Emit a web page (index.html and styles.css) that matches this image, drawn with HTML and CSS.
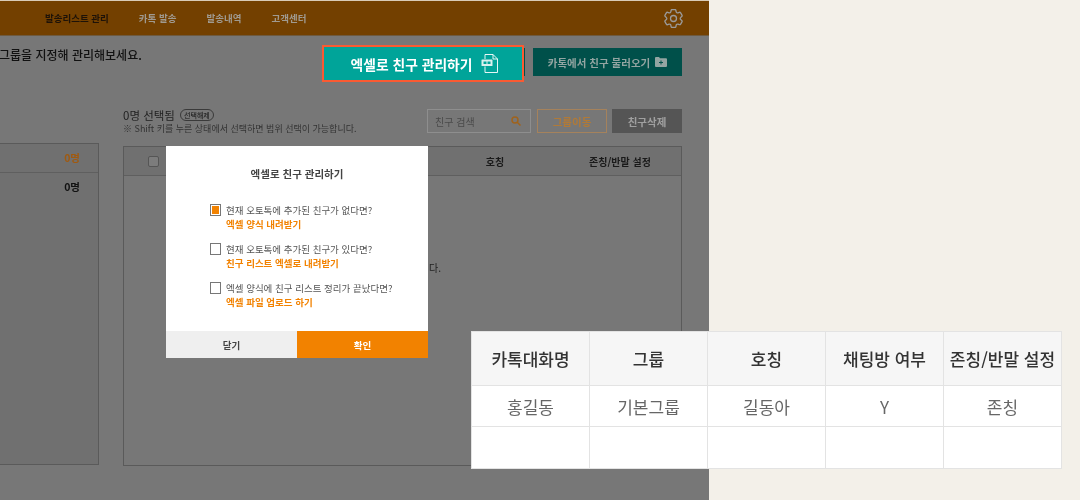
FILE: index.html
```html
<!DOCTYPE html>
<html lang="ko">
<head>
<meta charset="utf-8">
<title>엑셀로 친구 관리하기</title>
<link rel="stylesheet" href="styles.css">
</head>
<body>
<div class="stage">
  <div class="app">
    <header class="topbar">
      <nav class="nav">
        <a class="nav-item nav-active">발송리스트 관리</a>
        <a class="nav-item">카톡 발송</a>
        <a class="nav-item">발송내역</a>
        <a class="nav-item">고객센터</a>
      </nav>
      <svg class="gear" viewBox="2.500 2.500 19 19" fill="none" stroke="#9a9a9a" stroke-width="1.300" stroke-linejoin="round"><path d="M9.594 3.940c.090-.542.560-.940 1.110-.940h2.593c.550 0 1.020.398 1.110.940l.213 1.281c.063.374.313.686.645.870.074.040.147.083.220.127.325.196.720.257 1.075.124l1.217-.456a1.125 1.125 0 0 1 1.370.490l1.296 2.247a1.125 1.125 0 0 1-.260 1.431l-1.003.827c-.293.241-.438.613-.430.992a7.723 7.723 0 0 1 0 .255c-.008.378.137.750.430.991l1.004.827c.424.350.534.955.260 1.430l-1.298 2.247a1.125 1.125 0 0 1-1.369.491l-1.217-.456c-.355-.133-.750-.072-1.076.124a6.470 6.470 0 0 1-.220.128c-.331.183-.581.495-.644.869l-.213 1.281c-.090.543-.560.940-1.110.940h-2.594c-.550 0-1.019-.398-1.110-.940l-.213-1.281c-.062-.374-.312-.686-.644-.870a6.520 6.520 0 0 1-.220-.127c-.325-.196-.720-.257-1.076-.124l-1.217.456a1.125 1.125 0 0 1-1.369-.490l-1.297-2.247a1.125 1.125 0 0 1 .260-1.431l1.004-.827c.292-.240.437-.613.430-.991a6.932 6.932 0 0 1 0-.255c.007-.380-.138-.751-.430-.992l-1.004-.827a1.125 1.125 0 0 1-.260-1.430l1.297-2.247a1.125 1.125 0 0 1 1.370-.491l1.216.456c.356.133.751.072 1.076-.124.072-.044.146-.086.220-.128.332-.183.582-.495.644-.869l.214-1.280Z"/><circle cx="12" cy="12" r="3"/></svg>
    </header>
    <div class="actions">
      <p class="intro">그룹을 지정해 관리해보세요.</p>
      <div class="action-btns">
        <button class="excel-btn">엑셀로 친구 관리하기
          <svg class="doc-icon" viewBox="0 0 17 19" fill="none" stroke="#fff" stroke-width=".9"><path d="M4 5V.5h8l4.500 4.500v13.500H4V12.500"/><path d="M12 .5V5h4.500"/><rect x=".5" y="5.500" width="11" height="6.500" rx=".5" fill="#d8f0ee" stroke="none"/><path d="M2.500 8.750h7" stroke="#00a499" stroke-width="2.500" stroke-dasharray="3 1"/></svg>
        </button>
        <button class="import-btn">카톡에서 친구 불러오기
          <svg class="folder-icon" viewBox="0 0 12 10"><path d="M0 1a1 1 0 0 1 1-1h3l1 1.300h6a1 1 0 0 1 1 1V9a1 1 0 0 1-1 1H1a1 1 0 0 1-1-1z" fill="#93a5a2"/><path d="M6 3.500v4M4 5.500h4" stroke="#00504a" stroke-width="1"/></svg>
        </button>
      </div>
    </div>
    <div class="content">
      <aside class="groups">
        <div class="group-row group-head"><span class="count-accent">0명</span></div>
        <div class="group-row"><span class="count">0명</span></div>
      </aside>
      <section class="friends">
        <div class="toolbar">
          <div class="selection">
            <div class="sel-line"><span class="sel-count">0명 선택됨</span><span class="pill">선택해제</span></div>
            <div class="note">※ Shift 키를 누른 상태에서 선택하면 범위 선택이 가능합니다.</div>
          </div>
          <div class="tools">
            <div class="search"><span>친구 검색</span>
              <svg class="search-icon" viewBox="0 0 10 10" fill="none" stroke="#a0631c" stroke-width="1.500"><circle cx="4" cy="4" r="3"/><path d="M6.200 6.200L9.500 9.500"/></svg>
            </div>
            <button class="move-btn">그룹이동</button>
            <button class="delete-btn">친구삭제</button>
          </div>
        </div>
        <div class="friend-table">
          <div class="friend-head">
            <span class="head-check"><i class="box-dim"></i></span>
            <span class="head-title">호칭</span>
            <span class="head-setting">존칭/반말 설정</span>
          </div>
          <div class="friend-empty"><span>다.</span></div>
        </div>
      </section>
    </div>
    <div class="modal">
      <h2 class="modal-title">엑셀로 친구 관리하기</h2>
      <ul class="options">
        <li class="option"><i class="box box-on"></i><div><p>현재 오토톡에 추가된 친구가 없다면?</p><a>엑셀 양식 내려받기</a></div></li>
        <li class="option"><i class="box"></i><div><p>현재 오토톡에 추가된 친구가 있다면?</p><a>친구 리스트 엑셀로 내려받기</a></div></li>
        <li class="option"><i class="box"></i><div><p>엑셀 양식에 친구 리스트 정리가 끝났다면?</p><a>엑셀 파일 업로드 하기</a></div></li>
      </ul>
      <div class="modal-foot">
        <button class="close-btn">닫기</button>
        <button class="ok-btn">확인</button>
      </div>
    </div>
  </div>
  <table class="sample">
    <thead><tr><th>카톡대화명</th><th>그룹</th><th>호칭</th><th>채팅방 여부</th><th>존칭/반말 설정</th></tr></thead>
    <tbody>
      <tr><td>홍길동</td><td>기본그룹</td><td>길동아</td><td>Y</td><td>존칭</td></tr>
      <tr class="blank"><td></td><td></td><td></td><td></td><td></td></tr>
    </tbody>
  </table>
</div>
</body>
</html>
```
FILE: styles.css
```css
* { box-sizing: border-box; }
html, body { margin: 0; padding: 0; }
body {
  width: 1080px;
  height: 500px;
  overflow: hidden;
  background: #f3f0e9;
  font-family: "Noto Sans CJK KR", "Noto Sans", sans-serif;
  color: #222;
}
p, h2, ul { margin: 0; padding: 0; }
ul { list-style: none; }
button { font-family: inherit; border: 0; padding: 0; }
i { display: block; }

.stage { position: relative; width: 1080px; height: 500px; filter: blur(.3px); }
.app {
  position: relative;
  width: 709px;
  height: 500px;
  border-top: 1px solid #d9cbb6;
  background: #777;
  overflow: hidden;
}

.topbar {
  display: flex;
  align-items: center;
  justify-content: space-between;
  height: 35px;
  padding: 0 26px 0 45px;
  background: #734000;
  border-bottom: 1px solid #6e5a40;
}
.nav { display: flex; gap: 30px; }
.nav-item { font-size: 9.5px; font-weight: 700; line-height: 14px; color: #a09a90; }
.nav-active { color: #1d1208; }
.gear { width: 19px; height: 19px; }

.actions {
  display: flex;
  justify-content: space-between;
  height: 72px;
  padding: 9px 27px 0 0;
}
.intro { font-size: 12px; line-height: 20px; color: #111; font-weight: 500; margin-left: -1px; }
.action-btns { display: flex; align-items: flex-start; gap: 9px; height: 37px; }
.excel-btn {
  position: relative;
  display: flex;
  align-items: center;
  justify-content: center;
  gap: 9px;
  width: 202px;
  height: 37px;
  padding-left: 3px;
  background: #00a499;
  border: 2px solid #fa5a32;
  color: #fff;
  font-size: 13.8px;
  font-weight: 700;
}
.excel-btn::after {
  content: "";
  position: absolute;
  right: -3px;
  top: 1px;
  width: 1px;
  height: 28px;
  background: #00504a;
}
.doc-icon { width: 17px; height: 19px; }
.import-btn {
  display: flex;
  align-items: center;
  justify-content: center;
  gap: 5px;
  width: 149px;
  height: 28px;
  margin-top: 3px;
  background: #00504a;
  color: #93a5a2;
  font-size: 10.5px;
  font-weight: 700;
}
.folder-icon { width: 12px; height: 10px; }

.content { display: flex; gap: 24px; align-items: flex-start; height: 392px; padding-right: 27px; }
.groups {
  width: 99px;
  height: 322px;
  margin-top: 35px;
  background: #707070;
  border: 1px solid #5a5a5a;
  border-left: 0;
}
.group-row {
  display: flex;
  justify-content: flex-end;
  align-items: center;
  height: 29px;
  padding: 0 18px 2px 0;
  font-size: 10.5px;
  font-weight: 700;
}
.group-head { border-bottom: 1px solid #5f5f5f; }
.count-accent { color: #a05a10; }
.count { color: #111; }

.friends { display: flex; flex-direction: column; flex: 1; }
.toolbar { display: flex; justify-content: space-between; height: 38px; }
.sel-line { display: flex; align-items: center; gap: 5px; height: 14px; }
.sel-count { font-size: 11.5px; color: #222; }
.pill {
  width: 34px;
  height: 12px;
  border: 1px solid #3a3a3a;
  border-radius: 6px;
  font-size: 7px;
  line-height: 10px;
  text-align: center;
  color: #111;
}
.note { margin-top: 0; font-size: 9px; line-height: 14px; color: #333; white-space: nowrap; }
.tools { display: flex; gap: 5px; height: 24px; margin-top: 1px; }
.search {
  display: flex;
  align-items: center;
  justify-content: space-between;
  width: 104px;
  margin-right: 1px;
  padding: 0 9px 0 7px;
  border: 1px solid #8e8e8e;
  font-size: 10px;
  color: #4a4a4a;
}
.search-icon { width: 10px; height: 10px; }
.move-btn {
  width: 70px;
  background: transparent;
  border: 1px solid #a5825c;
  color: #b07a38;
  font-size: 10.5px;
  font-weight: 700;
}
.delete-btn { width: 70px; background: #555; color: #a0a0a0; font-size: 10.5px; font-weight: 700; }

.friend-table { height: 320px; border: 1px solid #5a5a5a; }
.friend-head {
  display: flex;
  align-items: center;
  height: 29px;
  background: #707070;
  border-bottom: 1px solid #5f5f5f;
  font-size: 10px;
  font-weight: 700;
  color: #1a1a1a;
}
.head-check { width: 329px; padding-left: 24px; }
.box-dim { width: 11px; height: 11px; border: 1px solid #555; border-radius: 2px; background: #7c7c7c; }
.head-title { width: 84px; text-align: center; }
.head-setting { flex: 1; padding-left: 22px; text-align: center; }
.friend-empty { height: 290px; padding: 85px 0 0 305px; font-size: 10px; line-height: 14px; color: #222; }

.modal {
  position: absolute;
  left: 166px;
  top: 145px;
  width: 262px;
  height: 212px;
  display: flex;
  flex-direction: column;
  background: #fff;
}
.modal-title {
  margin-top: 21px;
  font-size: 10.5px;
  line-height: 14px;
  font-weight: 700;
  text-align: center;
  color: #444;
}
.options { flex: 1; padding: 22px 0 0 44px; display: flex; flex-direction: column; gap: 11px; }
.option { display: flex; gap: 5px; height: 28px; }
.option p { font-size: 9.5px; line-height: 14px; color: #555; white-space: nowrap; }
.option a { display: block; font-size: 9.5px; line-height: 14px; font-weight: 700; color: #f28200; white-space: nowrap; }
.box { width: 11px; height: 12px; margin-top: 1px; border: 1px solid #777; background: #fff; }
.box-on { background: #f28200; box-shadow: inset 0 0 0 1px #fff; }
.modal-foot { display: flex; height: 27px; }
.close-btn, .ok-btn { flex: 1; font-size: 9.5px; font-weight: 700; }
.close-btn { background: #efefef; color: #444; }
.ok-btn { background: #f28200; color: #fff; }

.sample {
  position: absolute;
  left: 471px;
  top: 331px;
  width: 591px;
  height: 138px;
  border-collapse: collapse;
  table-layout: fixed;
  background: #fff;
}
.sample th, .sample td {
  border: 1px solid #e3e3e3;
  text-align: center;
  padding: 0;
  white-space: nowrap;
}
.sample th { height: 54px; background: #f6f6f6; font-size: 17px; font-weight: 500; color: #333; }
.sample td { height: 41px; font-size: 17px; font-weight: 400; color: #666; }
.sample .blank td { height: 42px; }
```
